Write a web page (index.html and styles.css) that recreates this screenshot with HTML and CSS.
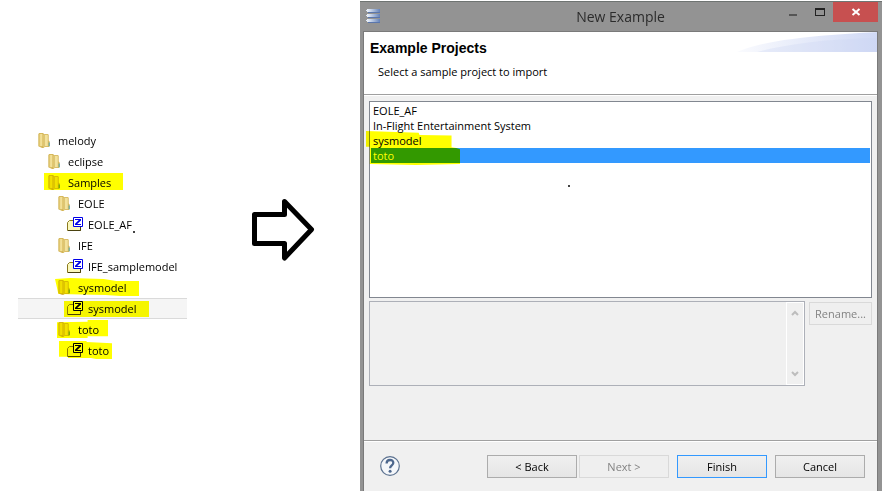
FILE: index.html
```html
<!DOCTYPE html>
<html lang="en">
<head>
<meta charset="utf-8">
<title>New Example</title>
<link rel="stylesheet" href="styles.css">
</head>
<body>
<svg class="defs" aria-hidden="true">
  <defs>
    <linearGradient id="flap" x1="0" x2="1" y1="0" y2="0"><stop offset="0" stop-color="#e3c86e"/><stop offset=".5" stop-color="#f7e7a4"/><stop offset="1" stop-color="#d9bb5c"/></linearGradient>
    <linearGradient id="disc" x1="0" x2="1" y1="0" y2="0"><stop offset="0" stop-color="#f0f5fc"/><stop offset="1" stop-color="#6482b8"/></linearGradient>
    <linearGradient id="sweep" x1="0" x2="1" y1="0" y2="0"><stop offset="0" stop-color="#fafbfe"/><stop offset="1" stop-color="#d0d9f5"/></linearGradient>
    <symbol id="folder" viewBox="0 0 16 18">
      <path d="M8 2h4l1 1v6l1 1v5l-1 1H8z" fill="#d6b85e"/>
      <path d="M9 3h3v12H9z" fill="#f3e29c"/>
      <path d="M2 2l1-1h4l1 1v15H6l-4-2z" fill="#d3b455"/>
      <path d="M3 2h4v13H3z" fill="url(#flap)"/>
      <path d="M7 3l2-1v14l-2 1z" fill="#dfc673"/>
      <path d="M13 11h1v4h-1z" fill="#4aa6b8"/>
    </symbol>
    <symbol id="project" viewBox="0 0 17 17">
      <path d="M1.500 6.500l2-2h4l1 2h6v8h-13z" fill="#fbf8bc" stroke="#8a7a20"/>
      <path d="M2 14.500h12.500V10" fill="none" stroke="#4a4210"/>
      <path d="M7.500 1.500h9v9h-9z" fill="#fff" stroke="#0000e8"/>
      <path d="M9 3h6v1.500L11.200 8H15v1H9V7.700L12.800 4H9z" fill="#0000e8"/>
    </symbol>
  </defs>
</svg>
<main class="page">
  <ul class="tree">
    <li class="node d0"><svg class="folder"><use href="#folder"/></svg>melody</li>
    <li class="node d1"><svg class="folder"><use href="#folder"/></svg>eclipse</li>
    <li class="node d1"><svg class="folder"><use href="#folder"/></svg>Samples<i class="mark mark-samples"></i></li>
    <li class="node d2"><svg class="folder"><use href="#folder"/></svg>EOLE</li>
    <li class="node d3"><svg class="project"><use href="#project"/></svg>EOLE_AF<i class="speck"></i></li>
    <li class="node d2"><svg class="folder"><use href="#folder"/></svg>IFE</li>
    <li class="node d3"><svg class="project"><use href="#project"/></svg>IFE_samplemodel</li>
    <li class="node d2"><svg class="folder"><use href="#folder"/></svg>sysmodel<i class="mark mark-sysfolder"></i></li>
    <li class="node d3 current"><svg class="project"><use href="#project"/></svg>sysmodel<i class="mark mark-sysproject"></i></li>
    <li class="node d2"><svg class="folder"><use href="#folder"/></svg>toto<i class="mark mark-totofolder"></i></li>
    <li class="node d3"><svg class="project"><use href="#project"/></svg>toto<i class="mark mark-totoproject"></i></li>
  </ul>
  <svg class="arrow" viewBox="0 0 64 64" aria-hidden="true"><path d="M3.500 17.500h30V4.500L60.500 32.500 33.500 61V46.500h-30z" fill="#fff" stroke="#000" stroke-width="5" stroke-linejoin="round"/></svg>
  <section class="dialog">
    <header class="titlebar">
      <svg class="app" viewBox="0 0 16 16"><path d="M1 1h13v3H1zM1 6h13v3H1zM1 11h13v3H1z" fill="url(#disc)"/><path d="M2 4h12v1H2zM2 9h12v1H2zM2 14h12v1H2z" fill="#5a76ad"/><path d="M0 2h2v1H0zM0 7h2v1H0zM0 12h2v1H0z" fill="#dfe8f5"/></svg>
      <h1 class="title">New Example</h1>
      <div class="controls">
        <button class="ctl" aria-label="Minimize"><svg viewBox="0 0 10 10"><path d="M1 7h8v2H1z" fill="#555"/></svg></button>
        <button class="ctl" aria-label="Maximize"><svg viewBox="0 0 10 10"><path d="M0 1h10v8H0zM1 3v5h8V3z" fill="#222" fill-rule="evenodd"/></svg></button>
        <button class="ctl close" aria-label="Close"><svg viewBox="0 0 10 10"><path d="M1.500 2l7 6M8.500 2l-7 6" stroke="#fff" stroke-width="2"/></svg></button>
      </div>
    </header>
    <div class="client">
      <div class="banner">
        <h2>Example Projects</h2>
        <p>Select a sample project to import</p>
        <svg class="sweep" viewBox="0 0 140 20"><path d="M0 20C25 8 80 3 140 0v20z" fill="url(#sweep)"/><path d="M20 20C55 11 95 7 140 6v14z" fill="#cbd5f3" opacity=".3"/></svg>
      </div>
      <div class="body">
        <div class="listwrap">
          <select class="list" size="4" aria-label="Sample projects">
            <option>EOLE_AF</option>
            <option>In-Flight Entertainment System</option>
            <option>sysmodel</option>
            <option selected>toto</option>
          </select>
          <i class="mark mark-list"></i>
          <i class="speck list-speck"></i>
        </div>
        <div class="details">
          <div class="descbox">
            <textarea class="desc" aria-label="Description" disabled></textarea>
            <div class="scroll">
              <svg viewBox="0 0 8 8"><path d="M1 6l3-3 3 3" fill="none" stroke="#bdbdbd" stroke-width="2"/></svg>
              <svg viewBox="0 0 8 8"><path d="M1 2l3 3 3-3" fill="none" stroke="#bdbdbd" stroke-width="2"/></svg>
            </div>
          </div>
          <button class="btn rename" disabled>Rename...</button>
        </div>
      </div>
      <footer class="footer">
        <button class="help" aria-label="Help"><svg viewBox="0 0 20 20"><circle cx="10" cy="10" r="9.300" fill="#f5f7fa" stroke="#5c7290" stroke-width="1.200"/><path d="M6.600 7.500C6.600 2.800 13.500 3 13.300 7c-.2 2.300-3.200 2.400-3.200 5.200" fill="none" stroke="#4d678d" stroke-width="2.300"/><circle cx="10.100" cy="15.300" r="1.500" fill="#4d678d"/></svg></button>
        <div class="pair">
          <button class="btn">&lt; Back</button>
          <button class="btn" disabled>Next &gt;</button>
        </div>
        <button class="btn primary">Finish</button>
        <button class="btn">Cancel</button>
      </footer>
    </div>
  </section>
</main>
</body>
</html>
```
FILE: styles.css
```css
* { box-sizing: border-box; }
html, body { height: 100%; }
body {
  margin: 0;
  background: #fff;
  color: #000;
  font: 11px/15px "Open Sans", "Noto Sans", sans-serif;
}
button, select, textarea { font: inherit; color: inherit; margin: 0; }
.defs { position: absolute; width: 0; height: 0; }
.page {
  display: grid;
  grid-template-columns: 169px 64px minmax(0, 1fr);
  min-height: 100%;
  padding: 1px 1px 1px 18px;
}

/* Project tree */
.tree { list-style: none; margin: 129px 0 0; padding: 0; }
.node {
  position: relative;
  display: flex;
  align-items: center;
  gap: 6px;
  height: 21px;
  border: 1px solid transparent;
  border-width: 1px 0;
  white-space: nowrap;
}
.d0 { padding-left: 18px; }
.d1 { padding-left: 28px; }
.d2 { padding-left: 38px; }
.d3 { padding-left: 48px; }
.current { background: #f5f5f5; border-color: #dadada; }
.folder { width: 16px; height: 17px; }
.project { width: 17px; height: 17px; margin-right: -1px; }

/* Marker strokes laid over the text */
.mark {
  position: absolute;
  background: #ff0;
  mix-blend-mode: multiply;
  pointer-events: none;
}
.mark-samples { left: 26px; top: 0; width: 79px; height: 17px; }
.mark-sysfolder {
  left: 37px; top: 0; width: 84px; height: 18px;
  clip-path: polygon(0 6%, 18% 0, 58% 5%, 73% 17%, 100% 17%, 100% 100%, 78% 100%, 60% 94%, 4% 89%);
}
.mark-sysproject { left: 46px; top: 2px; width: 85px; height: 16px; }
.mark-totofolder {
  left: 39px; top: 0; width: 51px; height: 18px;
  clip-path: polygon(0 12%, 60% 10%, 60% 0, 100% 0, 100% 90%, 60% 90%, 60% 100%, 0 100%);
}
.mark-totoproject {
  left: 41px; top: 0; width: 53px; height: 18px;
  clip-path: polygon(0 0, 52% 0, 52% 6%, 100% 12%, 100% 100%, 70% 100%, 60% 94%, 17% 94%, 17% 88%, 0 88%);
}
.speck { position: absolute; left: 115px; bottom: 1px; width: 2px; height: 2px; background: #444; }

.arrow { width: 64px; height: 64px; margin: 196px 0 0 64px; }

/* Dialog window */
.dialog {
  display: flex;
  flex-direction: column;
  margin-left: 109px;
  padding: 0 4px 0 3px;
  background: #939393;
  border-top: 1px solid #6f7472;
}
.titlebar {
  display: grid;
  grid-template-columns: 115px 1fr 115px;
  height: 29px;
}
.app { width: 16px; height: 16px; margin: 6px 0 0 3px; }
.title {
  margin: 0;
  font-size: 14px;
  line-height: 29px;
  font-weight: 400;
  text-align: center;
  color: #2b2b2b;
}
.controls { display: flex; justify-content: flex-end; height: 20px; }
.ctl { width: 27px; padding: 0; border: 0; background: none; display: grid; place-items: center; }
.ctl svg { width: 10px; height: 10px; }
.close { width: 45px; background: #c75050; }
.client {
  flex: 1;
  display: flex;
  flex-direction: column;
  background: #f0f0f0;
  border: 1px solid #7a7a7a;
  border-bottom: 0;
}
.banner {
  position: relative;
  height: 63px;
  padding: 6px;
  background: #fff;
  border-bottom: 1px solid #a0a0a0;
}
.banner h2 { margin: 0; font: bold 14px/20px "Liberation Sans", Arial, sans-serif; }
.banner p { margin: 6px 8px; }
.sweep { position: absolute; right: 0; top: 0; width: 140px; height: 20px; }
.body {
  flex: 1;
  display: flex;
  flex-direction: column;
  padding: 5px 5px 54px 5px;
  border-top: 1px solid #fff;
}
.listwrap { position: relative; flex: 1; display: flex; }
.list {
  flex: 1;
  padding: 1px;
  border: 1px solid #828790;
  border-radius: 0;
  background: #fff;
  outline: 0;
  overflow: hidden;
}
.list option { min-height: 15px; height: 15px; padding: 0 2px; line-height: 15px; }
.list option:checked { background: linear-gradient(#39f, #39f); -webkit-text-fill-color: #fff; }
.mark-list {
  left: -3px; top: 30px; width: 94px; height: 34px;
  clip-path: polygon(0 0, 56% 5%, 57% 12%, 91% 13%, 91% 48%, 96% 50%, 100% 54%, 100% 97%, 53% 100%, 4% 97%, 4% 46%, 0 46%);
}
.list-speck { left: 199px; top: 84px; }
.details { display: flex; align-items: flex-start; gap: 4px; margin-top: 3px; }
.descbox { flex: 1; display: flex; height: 85px; border: 1px solid #adb0b8; }
.desc { flex: 1; border: 0; padding: 2px; resize: none; background: #f0f0f0; }
.scroll {
  width: 18px;
  display: flex;
  flex-direction: column;
  align-items: center;
  justify-content: space-between;
  padding: 6px 0;
  border: 1px solid #fff;
}
.scroll svg { width: 8px; height: 8px; }
.footer {
  display: flex;
  align-items: center;
  gap: 8px;
  height: 51px;
  padding: 0 12px 0 16px;
  border-top: 1px solid #a0a0a0;
  box-shadow: inset 0 1px #fff;
}
.help { width: 20px; height: 20px; margin-right: auto; padding: 0; border: 0; background: none; }
.help svg { display: block; width: 20px; height: 20px; }
.pair { display: flex; gap: 2px; }
.btn {
  width: 90px;
  height: 23px;
  padding: 0;
  border: 1px solid #acacac;
  background: linear-gradient(#f0f0f0, #e5e5e5);
}
.btn:disabled { border-color: #d9d9d9; background: #efefef; color: #838383; }
.primary { border-color: #39f; }
.rename { width: 63px; margin-top: 1px; }
```
